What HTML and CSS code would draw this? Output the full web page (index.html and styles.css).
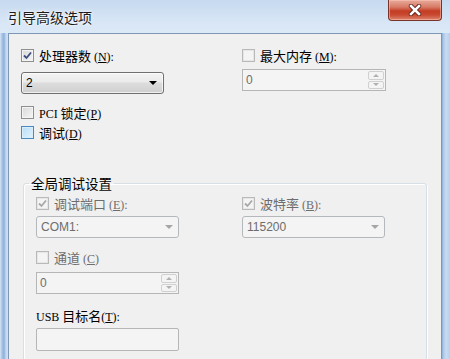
FILE: index.html
```html
<!DOCTYPE html>
<html>
<head>
<meta charset="utf-8">
<link rel="stylesheet" href="styles.css">
</head>
<body>
<div class="window">
  <div class="titlebar">
    <span class="title">引导高级选项</span>
    <div class="close">
      <svg width="16" height="12" viewBox="0 0 16 12"><path d="M4 2 L12 10 M12 2 L4 10" stroke="#5a1a10" stroke-width="4.4" fill="none" stroke-linecap="round"/><path d="M4 2 L12 10 M12 2 L4 10" stroke="#fff" stroke-width="2.6" fill="none" stroke-linecap="square"/></svg>
    </div>
  </div>
  <div class="client">
    <div class="grid top">
      <div class="col">
        <div class="check">
          <span class="box"><svg width="11" height="11" viewBox="0 0 11 11"><path d="M2 5.5 L4.5 8 L9 2.5" stroke="#3b4f7f" stroke-width="1.8" fill="none"/></svg></span>
          <span class="lbl">处理器数 <span class="lat">(<u>N</u>):</span></span>
        </div>
        <div class="combo"><span>2</span><span class="arrow"></span></div>
        <div class="check pci">
          <span class="box"></span>
          <span class="lbl"><span class="lat">PCI</span> 锁定<span class="lat">(<u>P</u>)</span></span>
        </div>
        <div class="check dbg">
          <span class="box hot"></span>
          <span class="lbl">调试<span class="lat">(<u>D</u>)</span></span>
        </div>
      </div>
      <div class="col">
        <div class="check">
          <span class="box off"></span>
          <span class="lbl">最大内存 <span class="lat">(<u>M</u>):</span></span>
        </div>
        <div class="spin mem"><span class="val">0</span><span class="btns"><span class="up"></span><span class="dn"></span></span></div>
      </div>
    </div>
    <fieldset class="group">
      <legend>全局调试设置</legend>
      <div class="grid inner">
        <div class="col">
          <div class="check dis">
            <span class="box off"><svg width="11" height="11" viewBox="0 0 11 11"><path d="M2 5.5 L4.5 8 L9 2.5" stroke="#a8a8a8" stroke-width="1.8" fill="none"/></svg></span>
            <span class="lbl">调试端口 <span class="lat">(<u>E</u>):</span></span>
          </div>
          <div class="combo dcombo"><span>COM1:</span><span class="arrow"></span></div>
          <div class="check dis chan">
            <span class="box off"></span>
            <span class="lbl">通道 <span class="lat">(<u>C</u>)</span></span>
          </div>
          <div class="spin chspin"><span class="val">0</span><span class="btns"><span class="up"></span><span class="dn"></span></span></div>
          <div class="usb"><span class="lat">USB</span> 目标名<span class="lat">(<u>T</u>):</span></div>
          <div class="textbox"></div>
        </div>
        <div class="col">
          <div class="check dis">
            <span class="box off"><svg width="11" height="11" viewBox="0 0 11 11"><path d="M2 5.5 L4.5 8 L9 2.5" stroke="#a8a8a8" stroke-width="1.8" fill="none"/></svg></span>
            <span class="lbl">波特率 <span class="lat">(<u>B</u>):</span></span>
          </div>
          <div class="combo dcombo"><span>115200</span><span class="arrow"></span></div>
        </div>
      </div>
    </fieldset>
  </div>
</div>
</body>
</html>
```

FILE: styles.css
```css
* { box-sizing: border-box; }
html, body { margin: 0; padding: 0; }
body {
  width: 450px;
  height: 359px;
  overflow: hidden;
  font-family: "Noto Sans CJK SC", sans-serif;
  color: #000;
}
.window {
  height: 359px;
  overflow: hidden;
  display: flex;
  flex-direction: column;
  background: linear-gradient(to right, #d7e5f5 0, #a7c3e6 2px, #8fb0da 4px, #c4d9f1 6px, #cfe0f3 8px, #cfe0f3 441px, #8aa9cf 442px, #a6c4e8 443px, #c9dcf2 446px, #b7cfeb 450px);
}
.titlebar {
  height: 33px;
  flex: none;
  display: flex;
  align-items: flex-start;
  padding-left: 8px;
  background: linear-gradient(#c6d9ef, #d6e5f5 60%, #dce9f7);
}
.title {
  margin-top: 10px;
  font-size: 14px;
  line-height: 14px;
  color: #1b1b1b;
  text-shadow: 0 0 4px #ffffff, 0 0 2px #ffffff;
}
.close {
  margin-left: auto;
  margin-right: 8px;
  width: 54px;
  height: 21px;
  border: 1px solid #7a3326;
  border-top: none;
  border-radius: 0 0 4px 4px;
  background: linear-gradient(#e7ab9c, #d77b66 35%, #c43d24 55%, #c94a31 75%, #dc8670);
  box-shadow: inset 0 0 0 1px rgba(255, 200, 185, 0.5);
  display: flex;
  align-items: center;
  justify-content: center;
}
.client {
  flex: 1;
  min-height: 0;
  overflow: hidden;
  margin-left: 8px;
  width: 434px;
  border: 1px solid #7f97b4;
  border-bottom: none;
  background: #f0f0f0;
  padding: 15px 0 0 12px;
}
.grid {
  display: grid;
  grid-template-columns: 143px 144px;
  column-gap: 78px;
  align-items: start;
}
.col { display: flex; flex-direction: column; }
.check {
  display: flex;
  align-items: flex-start;
  height: 14px;
  font-size: 13px;
  line-height: 14px;
}
.box {
  width: 13px;
  height: 13px;
  flex: none;
  margin-right: 5px;
  border: 1px solid #8e8f8f;
  background: linear-gradient(135deg, #d8d8d8, #f6f6f6);
  box-shadow: inset 0 0 0 1px #f4f4f4;
  display: flex;
  align-items: center;
  justify-content: center;
}
.box.off {
  border-color: #b9b9b9;
  background: #f4f4f4;
  box-shadow: inset 0 0 0 1px #e6e6e6;
}
.box.hot {
  border-color: #4a8ac0;
  background: linear-gradient(135deg, #b6def7, #e2f3fd);
  box-shadow: inset 0 0 0 1px #d8eefb;
}
.lbl { white-space: nowrap; }
.lat {
  font-family: "Liberation Serif", serif;
  font-size: 12px;
}
.dis .lbl { color: #6d6d6d; }
.combo {
  margin-top: 9px;
  height: 22px;
  width: 143px;
  border: 1px solid #707070;
  border-radius: 3px;
  background: linear-gradient(#f3f3f3, #ebebeb 45%, #dddddd 50%, #cfcfcf);
  box-shadow: inset 0 0 0 1px rgba(255, 255, 255, 0.7);
  display: flex;
  align-items: center;
  justify-content: space-between;
  padding: 0 6px 0 4px;
  font-family: "Liberation Sans", sans-serif;
  font-size: 12px;
}
.arrow {
  width: 0;
  height: 0;
  border-left: 4px solid transparent;
  border-right: 4px solid transparent;
  border-top: 4px solid #000;
}
.dcombo {
  margin-top: 5px;
  border-color: #b5b8bb;
  background: #f4f4f4;
  box-shadow: none;
  color: #6d6d6d;
  padding: 0 5px 0 4px;
}
.dcombo .arrow { border-top-color: #a6a6a6; }
.pci { margin-top: 12px; }
.dbg { margin-top: 6px; }
.spin {
  height: 22px;
  width: 144px;
  border: 1px solid #b6b6b6;
  background: #f4f4f4;
  display: flex;
  align-items: stretch;
  font-family: "Liberation Sans", sans-serif;
  font-size: 12px;
  color: #6d6d6d;
}
.spin .val {
  flex: 1;
  display: flex;
  align-items: center;
  padding-left: 3px;
}
.mem { margin-top: 6px; }
.btns {
  width: 17px;
  display: flex;
  flex-direction: column;
  padding: 1px 1px 1px 0;
  gap: 1px;
}
.btns span {
  flex: 1;
  border: 1px solid #d0d0d0;
  border-radius: 2px;
  background: #f4f4f4;
  display: flex;
  align-items: center;
  justify-content: center;
}
.btns .up::after {
  content: "";
  border-left: 3px solid transparent;
  border-right: 3px solid transparent;
  border-bottom: 3px solid #b0b0b0;
}
.btns .dn::after {
  content: "";
  border-left: 3px solid transparent;
  border-right: 3px solid transparent;
  border-top: 3px solid #b0b0b0;
}
.group {
  margin: 36px 0 0 2px;
  width: 404px;
  height: 186px;
  min-width: 0;
  border: 1px solid #d5dfe5;
  border-radius: 3px;
  box-shadow: inset 1px 1px 0 #fff, 1px 1px 0 #fff;
  padding: 7px 0 0 12px;
}
.group legend {
  font-size: 13.5px;
  line-height: 14px;
  padding: 0 2px;
  margin-left: -7px;
}
.inner {
  grid-template-columns: 143px 144px;
  column-gap: 63px;
}
.chan { margin-top: 13px; }
.chspin { margin-top: 7px; width: 143px; }
.usb {
  margin-top: 15px;
  font-size: 13px;
  line-height: 14px;
  white-space: nowrap;
}
.textbox {
  margin-top: 4px;
  width: 143px;
  height: 23px;
  border: 1px solid #b6b6b6;
  border-radius: 2px;
  background: #f4f4f4;
}
```
